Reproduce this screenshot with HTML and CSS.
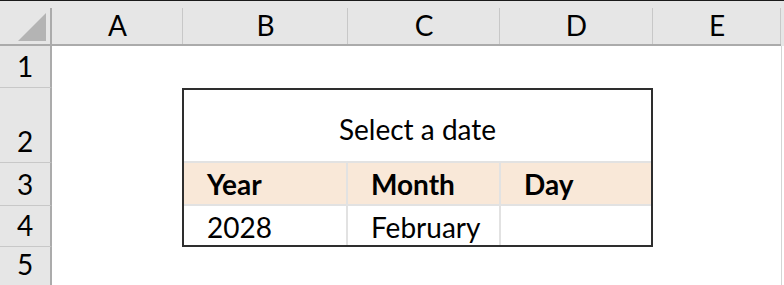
FILE: index.html
```html
<!DOCTYPE html>
<html lang="en">
<head>
    <meta charset="UTF-8">
    <meta name="viewport" content="width=device-width, initial-scale=1.0">
    <title>Select a date</title>
    <link rel="stylesheet" href="styles.css">
</head>
<body>
    <div class="sheet">
        <!-- column headers -->
        <div class="corner">
            <svg class="corner-tri" width="30" height="30" viewBox="0 0 30 30">
                <polygon points="29,1 29,29 1,29" fill="#b4b4b4"/>
            </svg>
        </div>
        <div class="col-head">A</div>
        <div class="col-head">B</div>
        <div class="col-head">C</div>
        <div class="col-head">D</div>
        <div class="col-head">E</div>
        <div class="col-head col-rest"></div>

        <!-- row headers -->
        <div class="row-head">1</div>
        <div class="row-head">2</div>
        <div class="row-head">3</div>
        <div class="row-head">4</div>
        <div class="row-head last">5</div>

        <div class="sheet-edge"></div>

        <!-- the date picker block, cells B2:D4 -->
        <div class="picker">
            <div class="picker-title">Select a date</div>
            <div class="cell head">Year</div>
            <div class="cell head">Month</div>
            <div class="cell head last">Day</div>
            <div class="cell">2028</div>
            <div class="cell">February</div>
            <div class="cell last"></div>
        </div>
    </div>
</body>
</html>
```

FILE: styles.css
```css
body {
    margin: 0;
    padding: 0;
    background-color: #fff;
    font-family: Lato, "Open Sans", sans-serif;
    color: #000;
}
.sheet {
    display: grid;
    grid-template-columns: 52px 131px 165px 152px 153px 128px 3px;
    grid-template-rows: 45px 42px 75px 43px 41px 38px;
    border-top: 1px solid #1a1a1a;
    font-size: 28px;
    line-height: 28px;
}
.corner,
.col-head {
    background-color: #e6e6e6;
    background-image: linear-gradient(#c8c8c8, #c8c8c8);
    background-size: 1px calc(100% - 7px);
    background-position: right bottom;
    background-repeat: no-repeat;
    border-bottom: 2px solid #ababab;
    display: flex;
    align-items: flex-end;
    justify-content: center;
    padding-bottom: 5px;
    box-sizing: border-box;
}
.corner {
    background-image: linear-gradient(#ababab, #ababab);
    background-size: 2px calc(100% - 7px);
    justify-content: flex-end;
    padding: 0 5px 2px 0;
}
.col-head.col-rest {
    background-image: none;
    border-bottom: none;
}
.row-head {
    grid-column: 1;
    background-color: #e6e6e6;
    border-right: 2px solid #ababab;
    border-bottom: 1px solid #c8c8c8;
    display: flex;
    align-items: flex-end;
    justify-content: center;
    padding-bottom: 7px;
    box-sizing: border-box;
}
.row-head.last {
    border-bottom: none;
}
.sheet-edge {
    grid-column: 7;
    grid-row: 2 / -1;
    border-left: 1px solid #d4d4d4;
}
.picker {
    grid-column: 3 / 6;
    grid-row: 3 / 6;
    display: grid;
    grid-template-columns: 164px 153px 1fr;
    grid-template-rows: 73px 43px 1fr;
    border: 2px solid #2e2e2e;
    margin-left: -1px;
    background-color: #fff;
}
.picker-title {
    grid-column: 1 / -1;
    border-bottom: 2px solid #e2e2e2;
    display: flex;
    align-items: center;
    justify-content: center;
    padding-top: 6px;
}
.cell {
    display: flex;
    align-items: flex-end;
    padding: 0 0 4px 23px;
    border-right: 2px solid #e2e2e2;
}
.cell.last {
    border-right: none;
}
.cell.head {
    background-color: #f9e8d8;
    font-weight: bold;
    border-bottom: 2px solid #e2e2e2;
    padding-bottom: 6px;
}
```
